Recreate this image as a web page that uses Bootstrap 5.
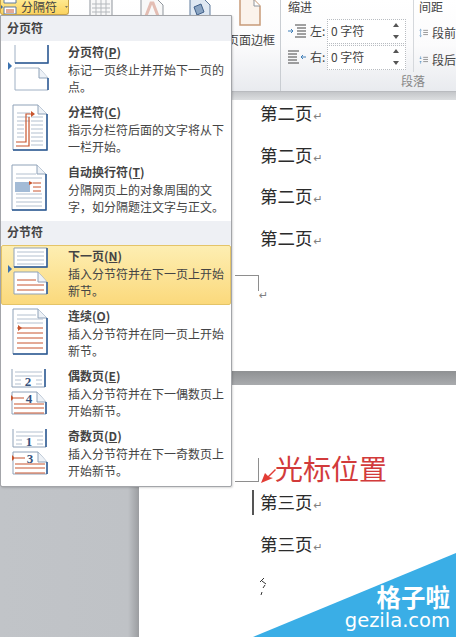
<!DOCTYPE html>
<html lang="zh-CN">
<head>
  <meta charset="UTF-8" />
  <title>分隔符</title>
  <meta name="viewport" content="width=device-width, initial-scale=1" />
  <link href="https://cdn.jsdelivr.net/npm/bootstrap@5.3.3/dist/css/bootstrap.min.css" rel="stylesheet" />
  <style>
    body {
      margin: 0;
      background: #fff;
      font-family: "Noto Sans CJK SC", "Liberation Sans", sans-serif;
      font-size: 12px;
      color: #444;
    }
    .app-frame { width: 456px; height: 637px; }

    /* ribbon */
    .ribbon-bar {
      height: 92px;
      background: linear-gradient(#fff 0, #fbfbfc 45px, #e9ebef 90px);
      border-bottom: 1px solid #b9bbbf;
    }
    .ribbon-left { width: 281px; border-right: 1px solid #c9cdd2; }
    .break-btn {
      width: 69px;
      height: 15px;
      background: linear-gradient(#ffe98f, #fbd35f);
      border: 1px solid #c9a44a;
      border-top: 0;
      border-radius: 0 0 3px 3px;
      line-height: 14px;
      white-space: nowrap;
      overflow: hidden;
    }
    .break-icon { margin-right: 2px; flex: none; }
    .rb-icon { position: absolute; top: 0; }
    .rb-label { position: absolute; left: 227px; top: 31px; font-size: 12px; line-height: 18px; white-space: nowrap; }
    .ribbon-indent { width: 132px; padding-left: 7px; }
    .ribbon-title { font-size: 12px; line-height: 14px; height: 18px; }
    .spin-row { height: 26px; }
    .spin-box {
      width: 79px;
      height: 25px;
      border: 1px dotted #b8bcc1;
      background: #fff;
      padding-left: 3px;
      line-height: 22px;
      font-size: 12px;
    }
    .spin-label { width: 39px; font-size: 12px; }
    .group-name {
      font-size: 12px;
      color: #888;
      text-align: right;
      margin-right: -12px;
      line-height: 14px;
      margin-top: 4px;
    }
    .ribbon-space {
      padding-left: 5px;
      flex: 1;
      height: 72px;
      white-space: nowrap;
      overflow: hidden;
      border-left: 1px solid #d5d8dc;
    }
    .space-row { height: 27px; padding-top: 2px; }

    /* document */
    .ribbon-shade { height: 8px; background: linear-gradient(#c4c6c9, #dcdee0); }
    .doc-area {
      height: 537px;
      padding-left: 139px;
      background: linear-gradient(90deg, #c1c4c8 0, #bfc2c6 128px, #9b9da0 139px);
    }
    .doc-page { background: #fff; padding-left: 121px; }
    .doc-first { height: 271px; }
    .doc-second { height: 252px; padding-top: 104px; }
    .doc-gap { height: 14px; background: linear-gradient(#8f9193, #a9abae); }
    .doc-line { font-size: 17.5px; line-height: 26px; height: 41.5px; color: #2b2b2b; white-space: nowrap; }
    .doc-return { font-family: "DejaVu Sans", sans-serif; font-size: 11px; color: #808080; margin-left: 1px; }
    .crop-mark { position: absolute; border-right: 1px solid #8e8e8e; border-bottom: 1px solid #8e8e8e; }
    .crop-first { left: 235px; width: 24px; height: 16px; border-bottom: 0; border-top: 1px solid #8e8e8e; top: 275px; }
    .crop-second { left: 235px; top: 458px; width: 24px; height: 24px; }
    .text-caret { position: absolute; left: 252px; top: 490px; width: 2px; height: 25px; background: #555; }
    .return-loose { position: absolute; left: 258px; top: 288px; }
    .note-text { position: absolute; left: 275px; top: 448px; font-size: 28px; line-height: 40px; color: #d23b3b; white-space: nowrap; }
    .note-arrow { position: absolute; left: 258px; top: 466px; }
    .char-bit { position: absolute; left: 258px; top: 576px; }

    /* menu */
    .break-menu {
      left: 0;
      top: 15px;
      width: 232px;
      height: 472px;
      padding: 0 0 1px;
      margin: 0;
      font-size: 12px;
      color: #444;
      border: 1px solid #a3a5a9;
      border-radius: 0 0 2px 2px;
      box-shadow: 1px 1px 2px rgba(0, 0, 0, .15);
      --bs-dropdown-min-width: 0;
    }
    .break-menu .dropdown-header {
      background: #eef0f4;
      color: #444;
      font-size: 12px;
      font-weight: 700;
      line-height: 24px;
      height: 25px;
      padding: 0 0 0 6px;
    }
    .break-menu .header-low { height: 24px; line-height: 22px; }
    .break-menu .dropdown-item {
      height: 60px;
      padding: 0;
      color: #444;
      white-space: nowrap;
      font-size: 12px;
      line-height: 17.5px;
      border: 1px solid transparent;
      border-radius: 2px;
    }
    .break-menu .dropdown-item.active {
      background: linear-gradient(#fdeeb2, #fbd97c);
      border-color: #e4c468;
      color: #444;
    }
    .break-svg { width: 59px; height: 58px; flex: none; margin: -1px 9px 0 -2px; }
    .item-text { padding-top: 1px; }
    .item-title { font-weight: 700; }
    .item-title u { text-underline-offset: 1px; }

    /* watermark */
    .site-mark { position: absolute; right: 0; bottom: 0; width: 203px; height: 84px; }
    .site-mark svg { position: absolute; inset: 0; }
    .site-cn { position: absolute; right: 6px; top: 32px; font-size: 24.5px; font-weight: 700; line-height: 24px; color: #fff; }
    .site-en { position: absolute; right: 6px; top: 56px; font-family: "DejaVu Sans", sans-serif; font-size: 19.5px; line-height: 24px; color: #fff; }
  </style>
</head>
<body>
  <div class="app-frame position-relative overflow-hidden">

    <!-- ribbon -->
    <div class="ribbon-bar d-flex">
      <div class="ribbon-left position-relative">
        <div class="break-btn d-flex align-items-center">
          <svg width="18" height="14" viewBox="0 0 18 14" class="break-icon">
            <path d="M3 0V3H15V0M3 7H15V14H3Z" fill="#fff" stroke="#5f7b9c" />
            <path d="M0 5L2 7L0 9Z" fill="#36659c" />
            <path d="M5 10H13M5 12H13" stroke="#c8552e" />
          </svg>
          <span>分隔符</span>
          <svg width="7" height="4" viewBox="0 0 7 4" class="ms-2"><path d="M0 0H7L3.5 4Z" fill="#555" /></svg>
        </div>
        <svg class="rb-icon" style="left: 89px" width="24" height="16" viewBox="0 0 24 16">
          <path d="M1 0V16H23V0" fill="#f8f8f8" stroke="#8f959c" />
          <path d="M3 4H21M3 8H21M3 12H21M7 0V16M12 0V16M17 0V16" stroke="#b5b9bd" />
        </svg>
        <svg class="rb-icon" style="left: 140px" width="24" height="16" viewBox="0 0 24 16">
          <path d="M1 0V16H23V5L18 0" fill="#f8f8f8" stroke="#8f959c" />
          <path d="M6 16L11 3H13L18 16" fill="none" stroke="#e3bdb3" stroke-width="3" />
        </svg>
        <svg class="rb-icon" style="left: 189px" width="22" height="16" viewBox="0 0 22 16">
          <path d="M1 0V16H21V5L16 0" fill="#dfe8f2" stroke="#5f7b9c" />
          <path d="M5 7L12 4L15 12L8 15Z" fill="#8aa4c2" stroke="#3f5f88" />
        </svg>
        <svg class="rb-icon" style="left: 239px" width="23" height="26" viewBox="0 0 23 26">
          <path d="M1 0V25H21V6L15 0" fill="#fbf3ec" stroke="#c79a78" stroke-width="1.5" />
          <path d="M15 0V6H21" fill="#fff" stroke="#8f959c" />
        </svg>
        <div class="rb-label">页面边框</div>
      </div>

      <div class="ribbon-indent">
        <div class="ribbon-title">缩进</div>
        <div class="spin-row d-flex align-items-center">
          <div class="spin-label d-flex align-items-center">
            <svg width="18" height="14" viewBox="0 0 18 14" class="me-1"><path d="M7 1H18M9 4H18M9 7H18M9 10H18M7 13H18" stroke="#444" /><path d="M0 7H5M3 5L5 7L3 9" fill="none" stroke="#3f7fb8" /></svg>
            <span>左:</span>
          </div>
          <div class="spin-box d-flex justify-content-between">
            <span>0 字符</span>
            <svg width="10" height="22" viewBox="0 0 10 22" class="me-1"><path d="M2 7L5 3L8 7ZM2 15L5 19L8 15Z" fill="#555" /></svg>
          </div>
        </div>
        <div class="spin-row d-flex align-items-center">
          <div class="spin-label d-flex align-items-center">
            <svg width="18" height="14" viewBox="0 0 18 14" class="me-1"><path d="M0 1H11M0 4H9M0 7H9M0 10H9M0 13H11" stroke="#444" /><path d="M18 7H13M15 5L13 7L15 9" fill="none" stroke="#3f7fb8" /></svg>
            <span>右:</span>
          </div>
          <div class="spin-box d-flex justify-content-between">
            <span>0 字符</span>
            <svg width="10" height="22" viewBox="0 0 10 22" class="me-1"><path d="M2 7L5 3L8 7ZM2 15L5 19L8 15Z" fill="#555" /></svg>
          </div>
        </div>
        <div class="group-name">段落</div>
      </div>

      <div class="ribbon-space">
        <div class="ribbon-title">间距</div>
        <div class="space-row d-flex align-items-center">
          <svg width="17" height="16" viewBox="0 0 17 16" class="me-1"><path d="M3 1V15M1 3L3 1L5 3M1 13L3 15L5 13" fill="none" stroke="#3f7fb8" /><path d="M8 3H17M8 7H17M8 11H17" stroke="#444" /></svg>
          <span>段前</span>
        </div>
        <div class="space-row d-flex align-items-center">
          <svg width="17" height="16" viewBox="0 0 17 16" class="me-1"><path d="M3 1V6M3 10V15M1 4L3 6L5 4M1 12L3 10L5 12" fill="none" stroke="#3f7fb8" /><path d="M8 3H17M8 7H17M8 11H17" stroke="#444" /></svg>
          <span>段后</span>
        </div>
      </div>
    </div>
    <div class="ribbon-shade"></div>

    <!-- document pages -->
    <div class="doc-area">
      <div class="doc-page doc-first">
        <div class="doc-line">第二页<span class="doc-return">↵</span></div>
        <div class="doc-line">第二页<span class="doc-return">↵</span></div>
        <div class="doc-line">第二页<span class="doc-return">↵</span></div>
        <div class="doc-line">第二页<span class="doc-return">↵</span></div>
      </div>
      <div class="doc-gap"></div>
      <div class="doc-page doc-second">
        <div class="doc-line">第三页<span class="doc-return">↵</span></div>
        <div class="doc-line">第三页<span class="doc-return">↵</span></div>
      </div>
    </div>

    <div class="crop-mark crop-first"></div>
    <span class="return-loose doc-return">↵</span>
    <div class="crop-mark crop-second"></div>
    <div class="text-caret"></div>
    <div class="note-text">光标位置</div>
    <svg class="note-arrow" width="20" height="20" viewBox="0 0 20 20">
      <path d="M3 17L7 7L10 10L17 3L18 4L11 11L15 12Z" fill="#e23c35" />
    </svg>
    <svg class="char-bit" width="10" height="20" viewBox="0 0 10 20">
      <path d="M6 2L2 6M4 5L8 8M7 9L5 12M4 16L3 19" stroke="#333" />
    </svg>

    <!-- break menu -->
    <div class="dropdown-menu show break-menu">
      <div class="dropdown-header">分页符</div>

      <a class="dropdown-item d-flex" href="#">
        <svg class="break-svg" viewBox="0 0 59 58">
          <path d="M15 4V22H48V4" fill="#fff" stroke="#9fb0c4" />
          <path d="M48 4V22H15" fill="none" stroke="#2c5a94" stroke-width="1.5" />
          <path d="M15 27H39L48 37V49H15Z" fill="#fff" stroke="#9fb0c4" />
          <path d="M39 27V37H48" fill="#eef2f7" stroke="#8fa2b8" />
          <path d="M48 37V49" stroke="#2c5a94" stroke-width="1.5" />
          <path d="M8 21L12 25L8 29Z" fill="#3b72b0" />
        </svg>
        <div class="item-text">
          <div class="item-title">分页符(<u>P</u>)</div>
          <div>标记一页终止并开始下一页的<br />点。</div>
        </div>
      </a>

      <a class="dropdown-item d-flex" href="#">
        <svg class="break-svg" viewBox="0 0 59 58">
          <path d="M13 4H38L47 13V49H13Z" fill="#fff" stroke="#8fa2b8" />
          <path d="M38 4V13H47" fill="#eef2f7" stroke="#8fa2b8" />
          <path d="M47 13V49H13" fill="none" stroke="#2c5a94" stroke-width="1.5" />
          <path d="M17 12H30M17 16H30M17 20H30M17 24H24M17 28H24M17 32H24M17 36H24M31 16H43M31 20H43M31 24H43M31 28H43M31 32H43M31 36H43M31 40H43M31 44H43" stroke="#b3c0cf" />
          <path d="M16 41H26V13H31M16 45H29V16" fill="none" stroke="#c8552e" stroke-width="1.2" />
          <path d="M31 10L35 13L31 16Z" fill="#c8552e" />
        </svg>
        <div class="item-text">
          <div class="item-title">分栏符(<u>C</u>)</div>
          <div>指示分栏符后面的文字将从下<br />一栏开始。</div>
        </div>
      </a>

      <a class="dropdown-item d-flex" href="#">
        <svg class="break-svg" viewBox="0 0 59 58">
          <path d="M12 4H37L46 13V49H12Z" fill="#fff" stroke="#8fa2b8" />
          <path d="M37 4V13H46" fill="#eef2f7" stroke="#8fa2b8" />
          <path d="M46 13V49H12" fill="none" stroke="#2c5a94" stroke-width="1.5" />
          <path d="M16 13H36M16 17H42M16 33H42M16 37H42M16 41H42M16 45H42" stroke="#b3c0cf" />
          <rect x="15" y="21" width="15" height="10" fill="#a3bbd6" />
          <path d="M33 22H41M33 26H41M33 30H41" stroke="#c8552e" />
          <path d="M29 20L33 22L29 24Z" fill="#c8552e" />
        </svg>
        <div class="item-text">
          <div class="item-title">自动换行符(<u>T</u>)</div>
          <div>分隔网页上的对象周围的文<br />字，如分隔题注文字与正文。</div>
        </div>
      </a>

      <div class="dropdown-header header-low">分节符</div>

      <a class="dropdown-item d-flex active" href="#">
        <svg class="break-svg" viewBox="0 0 59 58">
          <path d="M14 3H47V22H14Z" fill="#fff" stroke="#8fa2b8" />
          <path d="M47 3V22H14" fill="none" stroke="#2c5a94" stroke-width="1.5" />
          <path d="M17 7H44M17 11H44M17 15H44M17 19H44" stroke="#b3c0cf" />
          <path d="M14 27H38L47 37V49H14Z" fill="#fff" stroke="#8fa2b8" />
          <path d="M38 27V37H47" fill="#eef2f7" stroke="#8fa2b8" />
          <path d="M47 37V49" stroke="#2c5a94" stroke-width="1.5" />
          <path d="M17 35H36M17 40H44M17 45H44" stroke="#c8552e" />
          <path d="M8 20L12 24L8 28Z" fill="#3b72b0" />
        </svg>
        <div class="item-text">
          <div class="item-title">下一页(<u>N</u>)</div>
          <div>插入分节符并在下一页上开始<br />新节。</div>
        </div>
      </a>

      <a class="dropdown-item d-flex" href="#">
        <svg class="break-svg" viewBox="0 0 59 58">
          <path d="M13 4H38L47 13V49H13Z" fill="#fff" stroke="#8fa2b8" />
          <path d="M38 4V13H47" fill="#eef2f7" stroke="#8fa2b8" />
          <path d="M47 13V49H13" fill="none" stroke="#2c5a94" stroke-width="1.5" />
          <path d="M17 10H36M17 14H43M17 18H43" stroke="#b3c0cf" />
          <path d="M17 23H43M17 28H43M17 33H43M17 38H43M17 43H43" stroke="#c8552e" />
          <path d="M18 20L22 23L18 26Z" fill="#c8552e" />
        </svg>
        <div class="item-text">
          <div class="item-title">连续(<u>O</u>)</div>
          <div>插入分节符并在同一页上开始<br />新节。</div>
        </div>
      </a>

      <a class="dropdown-item d-flex" href="#">
        <svg class="break-svg" viewBox="0 0 59 58">
          <path d="M12 4V22H45V4" fill="#fff" stroke="#8fa2b8" />
          <path d="M45 4V22" stroke="#2c5a94" stroke-width="1.5" />
          <path d="M15 7H42M15 11H42M15 15H21M36 15H42M15 19H21M36 19H42" stroke="#b3c0cf" />
          <text x="28" y="21" font-family="Liberation Serif" font-weight="700" font-size="13" fill="#36527c" text-anchor="middle">2</text>
          <path d="M12 27H37L46 37V49H12Z" fill="#fff" stroke="#8fa2b8" />
          <path d="M37 27V37H46" fill="#eef2f7" stroke="#8fa2b8" />
          <path d="M46 37V49" stroke="#2c5a94" stroke-width="1.5" />
          <path d="M14 33H24M14 39H44M14 43H44M14 48H44" stroke="#c8552e" />
          <text x="29" y="38" font-family="Liberation Serif" font-weight="700" font-size="13" fill="#36527c" text-anchor="middle">4</text>
          <path d="M11 30L14 33L11 36Z" fill="#c8552e" />
        </svg>
        <div class="item-text">
          <div class="item-title">偶数页(<u>E</u>)</div>
          <div>插入分节符并在下一偶数页上<br />开始新节。</div>
        </div>
      </a>

      <a class="dropdown-item d-flex" href="#">
        <svg class="break-svg" viewBox="0 0 59 58">
          <path d="M13 4V22H46V4" fill="#fff" stroke="#8fa2b8" />
          <path d="M46 4V22" stroke="#2c5a94" stroke-width="1.5" />
          <path d="M16 7H43M16 11H43M16 15H22M37 15H43M16 19H22M37 19H43" stroke="#b3c0cf" />
          <text x="29" y="21" font-family="Liberation Serif" font-weight="700" font-size="13" fill="#36527c" text-anchor="middle">1</text>
          <path d="M13 27H38L47 37V49H13Z" fill="#fff" stroke="#8fa2b8" />
          <path d="M38 27V37H47" fill="#eef2f7" stroke="#8fa2b8" />
          <path d="M47 37V49" stroke="#2c5a94" stroke-width="1.5" />
          <path d="M15 33H25M15 39H45M15 43H45M15 48H45" stroke="#c8552e" />
          <text x="30" y="38" font-family="Liberation Serif" font-weight="700" font-size="13" fill="#36527c" text-anchor="middle">3</text>
          <path d="M12 30L15 33L12 36Z" fill="#c8552e" />
        </svg>
        <div class="item-text">
          <div class="item-title">奇数页(<u>D</u>)</div>
          <div>插入分节符并在下一奇数页上<br />开始新节。</div>
        </div>
      </a>
    </div>

    <!-- watermark -->
    <div class="site-mark">
      <svg width="203" height="84" viewBox="0 0 203 84"><path d="M0 84L203 0V84Z" fill="#3aaee6" /></svg>
      <div class="site-cn">格子啦</div>
      <div class="site-en">gezila.com</div>
    </div>
  </div>

  <script src="https://cdn.jsdelivr.net/npm/bootstrap@5.3.3/dist/js/bootstrap.bundle.min.js"></script>
</body>
</html>
